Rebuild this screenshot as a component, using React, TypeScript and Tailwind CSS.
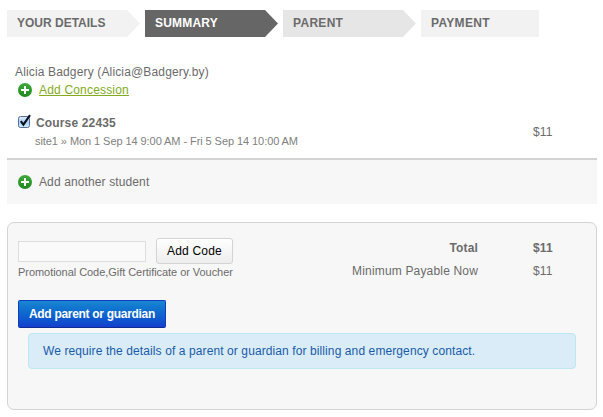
import React from "react";

function PlusIcon({ id }: { id: string }) {
  return (
    <svg width="14" height="14" viewBox="0 0 14 14" className="shrink-0">
      <defs>
        <linearGradient id={id} x1="0" y1="0" x2="0" y2="1">
          <stop offset="0" stopColor="#3fa83c" />
          <stop offset="1" stopColor="#1f8a1f" />
        </linearGradient>
      </defs>
      <circle cx="7" cy="7" r="7" fill={`url(#${id})`} />
      <path d="M6 3h2v3h3v2H8v3H6V8H3V6h3z" fill="#fff" />
    </svg>
  );
}

function CheckIcon() {
  return (
    <svg width="14" height="16" viewBox="0 0 14 16" className="shrink-0">
      <defs>
        <linearGradient id="box" x1="0" y1="0" x2="0" y2="1">
          <stop offset="0" stopColor="#e3effb" />
          <stop offset="0.5" stopColor="#a9cff3" />
          <stop offset="1" stopColor="#cdf1fd" />
        </linearGradient>
      </defs>
      <rect x="0.5" y="2.5" width="11" height="11" rx="2" fill="url(#box)" stroke="#5a6c9c" />
      <path d="M2.8 7.2 5.4 10.6 12 1.2" fill="none" stroke="#0b1020" strokeWidth="2.1" />
    </svg>
  );
}

const steps = [
  { label: "YOUR DETAILS", bg: "bg-[#f2f2f2] text-[#6b6b6b]", fill: "#f2f2f2", tracking: "" },
  { label: "SUMMARY", bg: "bg-[#666666] text-white", fill: "#666666", tracking: "tracking-[0.2px]" },
  { label: "PARENT", bg: "bg-[#e6e6e6] text-[#6b6b6b]", fill: "#e6e6e6", tracking: "tracking-[0.3px]" },
  { label: "PAYMENT", bg: "bg-[#f2f2f2] text-[#6b6b6b]", fill: "", tracking: "tracking-[0.3px]" },
];

export default function App() {
  return (
    <div className="h-[417px] w-[603px] overflow-hidden bg-white pt-[10px] pr-[6px] pl-[7px] font-['Liberation_Sans',Arial,sans-serif] text-xs leading-[18px] text-[#6b6b6b]">
      <div className="flex h-[27px]">
        {steps.map((s) => (
          <div key={s.label} className="flex w-[138px]">
            <div className={`flex items-center pb-[2px] pl-[10px] font-bold ${s.fill ? "w-[120px]" : "w-[118px]"} ${s.bg} ${s.tracking}`}>
              {s.label}
            </div>
            {s.fill && (
              <svg width="13" height="27" viewBox="0 0 13 27">
                <path d="M0 0 13 13.5 0 27z" fill={s.fill} />
              </svg>
            )}
          </div>
        ))}
      </div>

      <div className="flex h-[121px] pt-[26px]">
        <div className="flex-1 pl-2">
          <div className="tracking-[0.15px]">Alicia Badgery (Alicia@Badgery.by)</div>
          <div className="flex h-[18px] items-center pl-[3px]">
            <PlusIcon id="plus-concession" />
            <a className="mb-px ml-[7px] h-[13px] border-b border-[#82ab20] leading-[15px] tracking-[0.18px] text-[#82ab20]">Add Concession</a>
          </div>
          <div className="mt-[15px] flex h-[18px] items-center pl-[3px]">
            <div className="-mt-[2px]">
              <CheckIcon />
            </div>
            <span className="ml-1 font-bold tracking-[0.15px]">Course 22435</span>
          </div>
          <div className="pl-5 text-[11px] tracking-[-0.07px] text-[#808080]">site1 » Mon 1 Sep 14 9:00 AM - Fri 5 Sep 14 10:00 AM</div>
        </div>
        <div className="w-[64px] pt-[60px] tracking-[0.2px]">$11</div>
      </div>

      <div className="flex h-[46px] items-center border-t-2 border-[#d3d3d3] bg-[#f7f7f7] pl-[11px]">
        <PlusIcon id="plus-student" />
        <span className="ml-[7px] tracking-[0.12px]">Add another student</span>
      </div>

      <div className="mt-[18px] h-[188px] rounded-[7px] border border-[#d3d3d3] bg-[#f7f7f7] pt-[15px] pl-[10px]">
        <div className="flex h-[62px]">
          <div className="w-[300px]">
            <div className="flex h-[26px] items-center">
              <input className="h-[21px] w-[128px] border border-[#dddddd] bg-[#fafafa] px-1 outline-none" />
              <button className="ml-[10px] h-[26px] w-[77px] rounded-[3px] border border-[#d3d3d3] bg-linear-to-b from-white to-[#ededed] tracking-[0.2px] text-black">Add Code</button>
            </div>
            <div className="text-[11px] leading-[16px] tracking-[-0.05px]">Promotional Code,Gift Certificate or Voucher</div>
          </div>
          <div className="-mt-px w-[160px] text-right leading-[23px] tracking-[0.17px]">
            <div className="font-bold">Total</div>
            <div>Minimum Payable Now</div>
          </div>
          <div className="-mt-px pl-[55px] leading-[23px] tracking-[0.2px]">
            <div className="font-bold">$11</div>
            <div>$11</div>
          </div>
        </div>
        <button className="block h-[28px] w-[148px] rounded-[2px] border border-[#123bc0] border-b-[#0c2c96] bg-linear-to-b from-[#1a86d0] to-[#1440cc] font-bold tracking-[-0.3px] text-white">
          Add parent or guardian
        </button>
        <div className="mt-[5px] ml-[10px] flex h-[36px] w-[548px] items-center rounded-[4px] border border-[#bce8f1] bg-[#d9ecf7] pl-[14px] tracking-[0.1px] text-[#1a5ba8]">
          We require the details of a parent or guardian for billing and emergency contact.
        </div>
      </div>
    </div>
  );
}
